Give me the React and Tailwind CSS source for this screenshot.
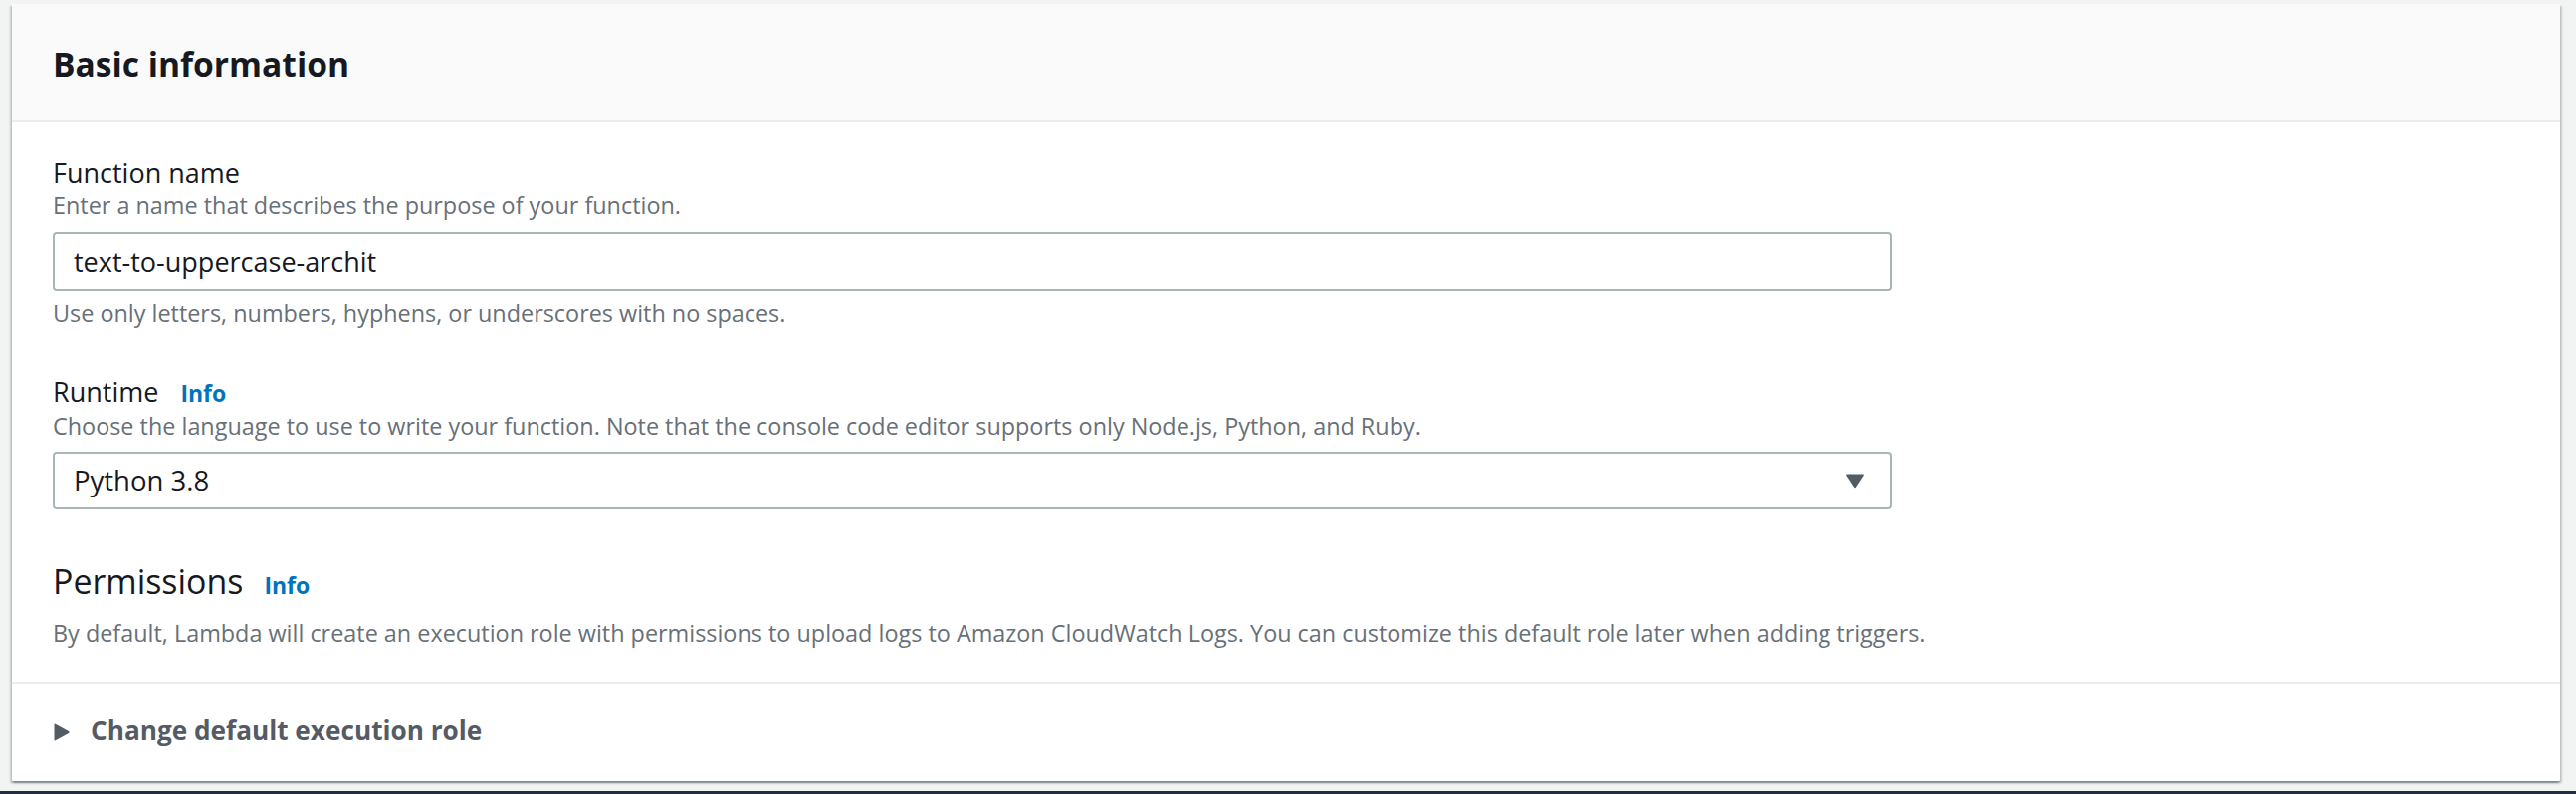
import React from "react";

function Info() {
  return (
    <span className="text-[23px] font-bold text-[#0073bb] leading-none">Info</span>
  );
}

export default function App() {
  return (
    <div
      className="w-[2588px] h-[798px] bg-[#f2f3f3] flex flex-col pt-[4px] pl-[12px] pr-[16px]"
      style={{ fontFamily: '"Open Sans", "Noto Sans", sans-serif' }}
    >
      <div className="bg-white rounded-[1px] shadow-[0_2px_2px_0_rgba(0,28,36,0.3),2px_2px_2px_0_rgba(0,28,36,0.15),-2px_2px_2px_0_rgba(0,28,36,0.15)]">
        {/* Header */}
        <div className="h-[119px] bg-[#fafafa] border-b-2 border-[#eaeded] flex items-center px-[41px] pt-[2px]">
          <h2 className="text-[33.6px] font-bold text-[#16191f] leading-[44px]">Basic information</h2>
        </div>

        {/* Body */}
        <div className="px-[41px] pt-[33px] pb-[34px] border-b-2 border-[#eaeded]">
          <div className="text-[27px] leading-[35px] text-[#16191f]">Function name</div>
          <div className="text-[23.4px] leading-[30px] text-[#687078]">
            Enter a name that describes the purpose of your function.
          </div>
          <div className="mt-[12px] w-[1848px] h-[59px] border-2 border-[#aab7b8] rounded-[4px] flex items-center px-[19px]">
            <span className="text-[27px] text-[#16191f] leading-none">text-to-uppercase-archit</span>
          </div>
          <div className="mt-[8px] text-[23.4px] leading-[30px] text-[#687078]">
            Use only letters, numbers, hyphens, or underscores with no spaces.
          </div>

          <div className="mt-[46px] flex items-baseline gap-[22px] h-[35px] leading-[35px]">
            <span className="text-[27px] text-[#16191f]">Runtime</span>
            <Info />
          </div>
          <div className="mt-[2px] text-[23.4px] leading-[30px] text-[#687078]">
            Choose the language to use to write your function. Note that the console code editor supports only Node.js, Python, and Ruby.
          </div>
          <div className="mt-[11px] w-[1848px] h-[58px] border-2 border-[#aab7b8] rounded-[4px] flex items-center justify-between pl-[19px] pr-[25px]">
            <span className="text-[27.5px] text-[#16191f] leading-none">Python 3.8</span>
            <svg width="20" height="16" viewBox="0 0 20 16">
              <path d="M2 1.5 L18 1.5 Q19.5 1.5 18.7 2.8 L11 14.5 Q10 16 9 14.5 L1.3 2.8 Q0.5 1.5 2 1.5 Z" fill="#545b64" />
            </svg>
          </div>

          <div className="mt-[50px] flex items-baseline gap-[21px] h-[44px] leading-[44px]">
            <span className="text-[33.9px] text-[#16191f]">Permissions</span>
            <Info />
          </div>
          <div className="mt-[15px] text-[23.4px] leading-[30px] text-[#687078]">
            By default, Lambda will create an execution role with permissions to upload logs to Amazon CloudWatch Logs. You can customize this default role later when adding triggers.
          </div>
        </div>

        {/* Expander */}
        <div className="px-[42px] pt-[30px] pb-[33px]">
          <div className="flex items-center h-[35px] gap-[21px]">
            <svg width="16" height="18" viewBox="0 0 16 18" className="mt-[2px]">
              <path d="M0.5 1.8 Q0.5 0 2.2 0.9 L15 8 Q16.2 9 15 10 L2.2 17.1 Q0.5 18 0.5 16.2 Z" fill="#545b64" />
            </svg>
            <span className="text-[26.2px] font-bold text-[#545b64] leading-[35px]">Change default execution role</span>
          </div>
        </div>
      </div>
      <div className="mt-auto h-[3px] bg-[#232f3e] -ml-[12px] -mr-[16px]" />
    </div>
  );
}
